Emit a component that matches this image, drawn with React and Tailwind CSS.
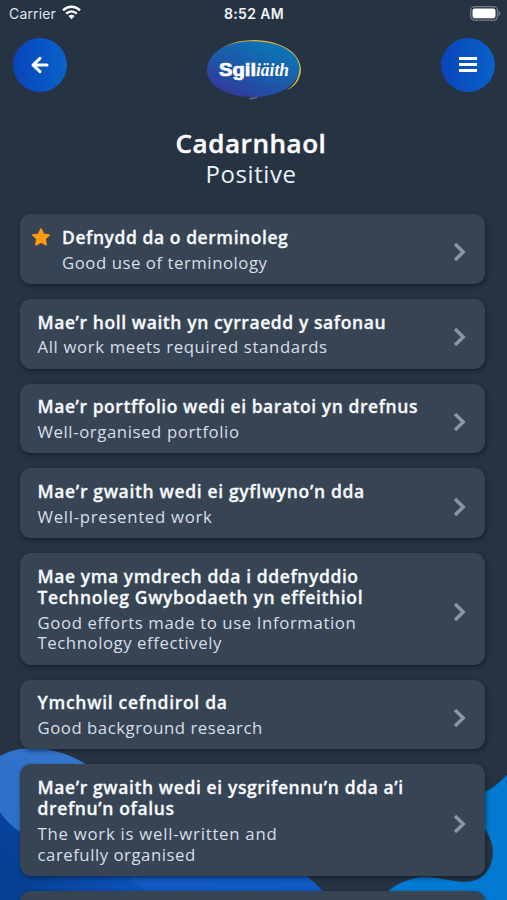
const items = [
  {
    star: true,
    title: [["Defnydd da o derminoleg", "tracking-[0.56px]"]],
    sub: [["Good use of terminology", "tracking-[0.54px]"]],
  },
  {
    title: [["Mae’r holl waith yn cyrraedd y safonau", "tracking-[0.58px]"]],
    sub: [["All work meets required standards", "tracking-[0.64px]"]],
  },
  {
    title: [["Mae’r portffolio wedi ei baratoi yn drefnus", "tracking-[0.55px]"]],
    sub: [["Well-organised portfolio", "tracking-[0.59px]"]],
  },
  {
    title: [["Mae’r gwaith wedi ei gyflwyno’n dda", "tracking-[0.66px]"]],
    sub: [["Well-presented work", "tracking-[0.71px]"]],
  },
  {
    title: [
      ["Mae yma ymdrech dda i ddefnyddio", "tracking-[0.58px]"],
      ["Technoleg Gwybodaeth yn effeithiol", "tracking-[0.65px]"],
    ],
    sub: [
      ["Good efforts made to use Information", "tracking-[0.61px]"],
      ["Technology effectively", "tracking-[0.56px]"],
    ],
  },
  {
    title: [["Ymchwil cefndirol da", "tracking-[0.70px]"]],
    sub: [["Good background research", "tracking-[0.53px]"]],
  },
  {
    title: [
      ["Mae’r gwaith wedi ei ysgrifennu’n dda a’i", "tracking-[0.61px]"],
      ["drefnu’n ofalus", "tracking-[0.62px]"],
    ],
    sub: [
      ["The work is well-written and", "tracking-[0.75px]"],
      ["carefully organised", "tracking-[0.53px]"],
    ],
  },
];

function Background() {
  return (
    <svg className="absolute inset-0" width="507" height="900" viewBox="0 0 507 900" aria-hidden="true">
      <defs>
        <linearGradient id="deep" x1="0" y1="0.6" x2="1" y2="0.4">
          <stop offset="0" stopColor="#073f92" />
          <stop offset="0.4" stopColor="#0b55c0" />
          <stop offset="1" stopColor="#0c57c4" />
        </linearGradient>
        <linearGradient id="soft" x1="0" y1="1" x2="1" y2="0">
          <stop offset="0" stopColor="#2b6fc6" />
          <stop offset="1" stopColor="#3576cf" />
        </linearGradient>
      </defs>
      <path d="M0 790 C90 790 230 830 305 875 C312 880 318 885 330 900 H0Z" fill="url(#deep)" />
      <path d="M126 870 C132 882 142 890 156 900 H330 C318 885 312 880 305 875Z" fill="#1a5fc6" opacity="0.45" />
      <path d="M0 756 C12 749 24 748 38 748 C58 750 76 757 90 767 L90 830 L20 832 C12 826 5 820 0 812Z" fill="url(#soft)" />
      <path d="M507 775 C500 782 493 788 485 792 L470 800 V815 C484 824 493 838 493 853 C492 871 481 882 464 882 C448 881 440 877 424 877 C408 878 396 884 386 893 L380 900 H507Z" fill="#027ad2" />
    </svg>
  );
}

function Logo() {
  return (
    <svg width="100" height="64" viewBox="0 0 100 64" className="block">
      <defs>
        <linearGradient id="logo" x1="0.15" y1="1" x2="0.8" y2="0.1">
          <stop offset="0" stopColor="#37349c" />
          <stop offset="0.45" stopColor="#1e55a8" />
          <stop offset="1" stopColor="#0b76b4" />
        </linearGradient>
      </defs>
      <path d="M12 16 C22 5 37 2 52 2 C78 3 97 14 98 31 C98 41 92 49 84 52 C92 46 96 41 95.500 31 C93 15 76 6 52 5 C36 4.500 23 8 12 16Z" fill="#dcb244" />
      <path d="M4 32 C5 13 25 3.300 50 3.300 C76 3.600 96.500 14 96.500 31 C95 47 79 55 62 58 C36 62 4 53 4 32Z" fill="url(#logo)" />
      <path d="M46 60.500 C49 59.800 52 59.500 55 58.500 C54 60.500 51 60.500 47 61.500Z" fill="#71808f" />
      <text x="16" y="37.500" fontFamily="'Liberation Sans', sans-serif" fontWeight="700" fontSize="18.500" fill="#fff" stroke="#fff" strokeWidth="0.700" textLength="37" lengthAdjust="spacingAndGlyphs">Sgil</text>
      <text x="53" y="37.500" fontFamily="'Liberation Serif', serif" fontStyle="italic" fontWeight="700" fontSize="18.500" fill="#fff" textLength="33" lengthAdjust="spacingAndGlyphs">iäith</text>
    </svg>
  );
}

function Card({ star, title, sub }) {
  return (
    <li className="flex items-center rounded-[11px] bg-[#374454] pl-[18px] pr-[19px] pt-[12.900px] pb-[10.700px] shadow-[1px_2px_4px_rgba(8,18,28,0.55)]">
      {star && (
        <svg width="20" height="20" viewBox="0 0 20 20" className="-ml-[6.500px] mr-[11px] mt-[0.500px] self-start">
          <path
            d="M10 2 L12.500 7.300 L18.200 8 L14 12 L15.100 17.700 L10 15 L4.900 17.700 L6 12 L1.800 8 L7.500 7.300Z"
            fill="#ff9c12"
            stroke="#ff9c12"
            strokeWidth="1.600"
            strokeLinejoin="round"
          />
        </svg>
      )}
      <div className="min-w-0 flex-1 whitespace-nowrap">
        <h2 className="text-[17.500px] leading-[21.200px] font-semibold text-[#f7fafc] [-webkit-text-stroke:0.300px_#f7fafc]">
          {title.map(([text, tracking]) => (
            <span key={text} className={`block ${tracking}`}>{text}</span>
          ))}
        </h2>
        <p className="mt-[4.600px] text-[16.750px] leading-[20.400px] text-[#d9dfe6]">
          {sub.map(([text, tracking]) => (
            <span key={text} className={`block ${tracking}`}>{text}</span>
          ))}
        </p>
      </div>
      <svg width="13" height="20" viewBox="0 0 13 20" className="mt-[5px] shrink-0">
        <path d="M2 2 L10.300 10 L2 18" fill="none" stroke="#8b95a3" strokeWidth="3.400" />
      </svg>
    </li>
  );
}

export default function App() {
  return (
    <div className="relative h-[900px] w-[507px] overflow-hidden bg-[#263342] font-['Open_Sans',sans-serif] text-white">
      <Background />
      <div className="relative">
        <div className="grid h-7 grid-cols-3 items-center pl-[9px] pr-[8px] font-['Inter',sans-serif] text-[14px]">
          <div className="-mt-px flex items-center gap-[6px] text-[#dfe4ea]">
            <span className="tracking-[0.150px]">Carrier</span>
            <svg width="19" height="15" viewBox="0 0 19 15" className="-mt-[2px]">
              <g fill="none" stroke="#fff" strokeWidth="2.500">
                <path d="M1 5.300 C6 0.600 13 0.600 18 5.300" />
                <path d="M4.200 8.600 C7.300 5.700 11.700 5.700 14.800 8.600" />
              </g>
              <path d="M6.400 10.900 C8.200 9.300 10.800 9.300 12.600 10.900 L9.500 14.200Z" fill="#fff" />
            </svg>
          </div>
          <span className="-mt-px text-center font-semibold tracking-[0.350px] text-[#f1f4f7]">8:52 AM</span>
          <svg width="31" height="15" viewBox="0 0 31 15" className="-mr-[2px] -mt-[2px] justify-self-end">
            <rect x="0.700" y="0.700" width="26.800" height="13.400" rx="4" fill="none" stroke="#75808c" strokeWidth="1.300" />
            <rect x="2.500" y="2.500" width="23" height="9.800" rx="2.300" fill="#fff" />
            <path d="M28.700 5 C30.800 6 30.800 9 28.700 10Z" fill="#75808c" />
          </svg>
        </div>

        <header className="flex h-[80px] items-start justify-between pl-[13px] pr-[12px] pt-[9.500px]">
          <button className="flex size-[54px] items-center justify-center rounded-full bg-linear-to-r from-[#0a44bb] to-[#0b62c8]">
            <svg width="20" height="18" viewBox="0 0 20 18" fill="none" stroke="#fff" strokeWidth="3" strokeLinecap="round" strokeLinejoin="round">
              <path d="M10 2.300 L3 9 L10 15.700 M3.500 9 H17" />
            </svg>
          </button>
          <div className="-ml-[3px]">
            <Logo />
          </div>
          <button className="flex size-[54px] items-center justify-center rounded-full bg-linear-to-r from-[#0a44bb] to-[#0b62c8]">
            <span className="flex w-[17.500px] flex-col gap-[3.200px]">
              <span className="h-[3px] bg-white" />
              <span className="h-[3px] bg-white" />
              <span className="h-[3px] bg-white" />
            </span>
          </button>
        </header>

        <div className="mt-[20px] flex h-[86px] flex-col items-center pr-[5px]">
          <h1 className="text-[26px] leading-[31px] font-semibold tracking-[0.550px] [-webkit-text-stroke:0.400px_#fff]">Cadarnhaol</h1>
          <p className="text-[24px] leading-[30px] tracking-[0.600px] text-[#eaf1f7]">Positive</p>
        </div>

        <ul className="flex flex-col gap-[15px] pl-[19.500px] pr-[22px]">
          {items.map((item) => (
            <Card key={item.title[0][0]} {...item} />
          ))}
          <li className="h-[70px] rounded-[11px] bg-[#374454] shadow-[1px_2px_4px_rgba(8,18,28,0.55)]" />
        </ul>
      </div>
    </div>
  );
}
